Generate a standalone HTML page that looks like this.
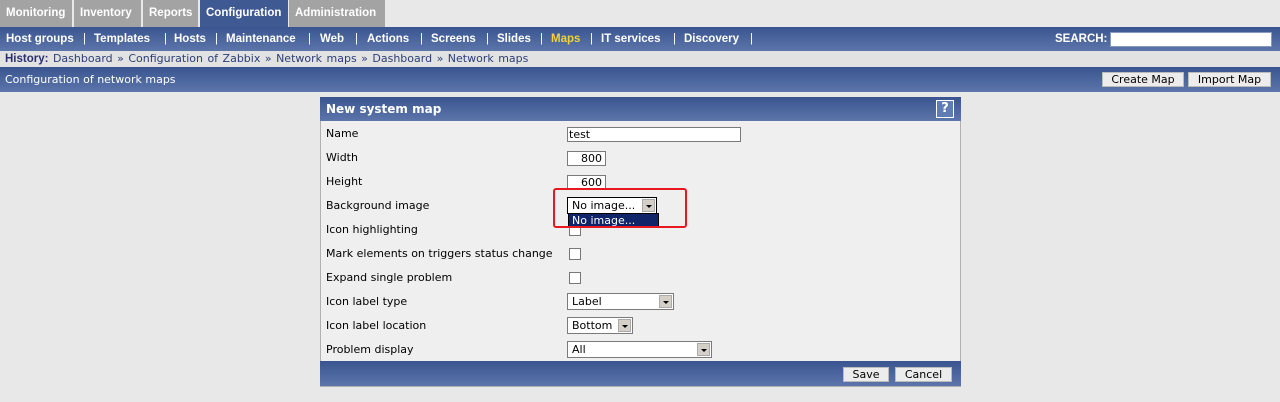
<!DOCTYPE html>
<html><head><meta charset="utf-8"><style>
*{margin:0;padding:0;box-sizing:border-box}
body{width:1280px;height:402px;background:#e8e8e8;font-family:"DejaVu Sans","Liberation Sans",sans-serif;font-size:11px;position:relative;overflow:hidden;color:#000}
.a{position:absolute}
.tab{position:absolute;top:0;height:27px;background:#a3a3a3;color:#fff;font-weight:bold;line-height:27px;padding-left:6px;font-size:11.5px;font-family:"Liberation Sans",sans-serif}
.blue{background:linear-gradient(#3a5490,#5c76ab)}
.nav{top:27px;left:0;width:1280px;height:24px;color:#fff;font-weight:bold;line-height:24px;font-family:"Liberation Sans",sans-serif;font-size:11.5px}
.nav span{position:absolute;top:0}
.sep{color:#fff;font-weight:normal}
.inp{position:absolute;background:#fff;border:1px solid #7a7a7a;height:15px;line-height:13px;padding:0 3px}
.sel{position:absolute;background:#fff;border:1px solid #7a7a7a;height:17px;line-height:15px;padding-left:4px}
.sel i{position:absolute;right:1px;top:1px;width:13px;height:13px;background:#d4d0c8;border:1px solid #aaa}
.sel i:after{content:"";position:absolute;left:3px;top:5px;border:3px solid transparent;border-top:3px solid #000}
.lbl{position:absolute;left:326px}
.cb{position:absolute;left:569px;width:12px;height:12px;background:#fff;border:1px solid #777}
.btn{position:absolute;background:#ececec;border:1px solid #bbb;height:15px;line-height:13px;text-align:center}
</style></head><body>
<div class="tab" style="left:0;width:72px">Monitoring</div>
<div class="tab" style="left:74px;width:67px">Inventory</div>
<div class="tab" style="left:143px;width:55px">Reports</div>
<div class="tab" style="left:200px;width:88px;background:#3f5a92">Configuration</div>
<div class="tab" style="left:289px;width:96px">Administration</div>
<div class="a nav blue">
<span style="left:6px">Host groups</span><span class="sep" style="left:83px">|</span>
<span style="left:94px">Templates</span><span class="sep" style="left:164px">|</span>
<span style="left:174px">Hosts</span><span class="sep" style="left:215px">|</span>
<span style="left:226px">Maintenance</span><span class="sep" style="left:308px">|</span>
<span style="left:320px">Web</span><span class="sep" style="left:355px">|</span>
<span style="left:367px">Actions</span><span class="sep" style="left:420px">|</span>
<span style="left:431px">Screens</span><span class="sep" style="left:486px">|</span>
<span style="left:497px">Slides</span><span class="sep" style="left:540px">|</span>
<span style="left:551px;color:#f0d23a">Maps</span><span class="sep" style="left:590px">|</span>
<span style="left:601px">IT services</span><span class="sep" style="left:673px">|</span>
<span style="left:684px">Discovery</span><span class="sep" style="left:750px">|</span>
<span style="left:1055px">SEARCH:</span>
</div>
<div class="a" style="left:1110px;top:32px;width:162px;height:15px;background:#fff;border:1px solid #8899bb"></div>
<div class="a" style="left:0;top:51px;width:1280px;height:16px;background:#e2e2e2;line-height:16px;padding-left:5px;color:#2c3e78;word-spacing:1px"><b style="color:#2c3070;font-family:'Liberation Sans',sans-serif;font-size:11.5px">History:</b> Dashboard » Configuration of Zabbix » Network maps » Dashboard » Network maps</div>
<div class="a blue" style="left:0;top:67px;width:1280px;height:25px;color:#fff;line-height:25px;padding-left:5px">Configuration of network maps</div>
<div class="btn" style="left:1102px;top:72px;width:82px">Create Map</div>
<div class="btn" style="left:1188px;top:72px;width:83px">Import Map</div>

<div class="a" style="left:320px;top:97px;width:641px;height:290px;background:#efefef;border:1px solid #b0b0b0"></div>
<div class="a blue" style="left:320px;top:97px;width:641px;height:24px;color:#fff;font-weight:bold;line-height:24px;padding-left:6px;font-size:12px">New system map</div>
<div class="a" style="left:936px;top:100px;width:18px;height:18px;background:#5f7cb4;border:1px solid #fff;color:#fff;font-weight:bold;text-align:center;line-height:16px;font-size:13px">?</div>

<div class="lbl" style="top:127px">Name</div>
<div class="lbl" style="top:151px">Width</div>
<div class="lbl" style="top:175px">Height</div>
<div class="lbl" style="top:199px">Background image</div>
<div class="lbl" style="top:223px">Icon highlighting</div>
<div class="lbl" style="top:247px">Mark elements on triggers status change</div>
<div class="lbl" style="top:271px">Expand single problem</div>
<div class="lbl" style="top:295px">Icon label type</div>
<div class="lbl" style="top:319px">Icon label location</div>
<div class="lbl" style="top:343px">Problem display</div>

<div class="inp" style="left:567px;top:127px;width:174px;padding-left:1px">test</div>
<div class="inp" style="left:567px;top:151px;width:39px;text-align:right">800</div>
<div class="inp" style="left:567px;top:175px;width:39px;text-align:right">600</div>
<div class="cb" style="top:224px"></div>
<div class="cb" style="top:248px"></div>
<div class="cb" style="top:272px"></div>
<div class="sel" style="left:567px;top:197px;width:90px;border:1px solid #000">No image...<i></i></div>
<div class="a" style="left:568px;top:213px;width:91px;height:14px;background:#10246a;color:#fff;line-height:13px;padding-left:3px;border:1px solid #000">No image...</div>
<div class="a" style="left:553px;top:188px;width:134px;height:40px;border:2px solid #e8191e;border-radius:3px"></div>
<div class="sel" style="left:567px;top:293px;width:107px">Label<i></i></div>
<div class="sel" style="left:567px;top:317px;width:66px">Bottom<i></i></div>
<div class="sel" style="left:567px;top:341px;width:145px">All<i></i></div>

<div class="a blue" style="left:320px;top:361px;width:641px;height:25px"></div>
<div class="btn" style="left:843px;top:367px;width:46px">Save</div>
<div class="btn" style="left:895px;top:367px;width:57px">Cancel</div>
</body></html>
